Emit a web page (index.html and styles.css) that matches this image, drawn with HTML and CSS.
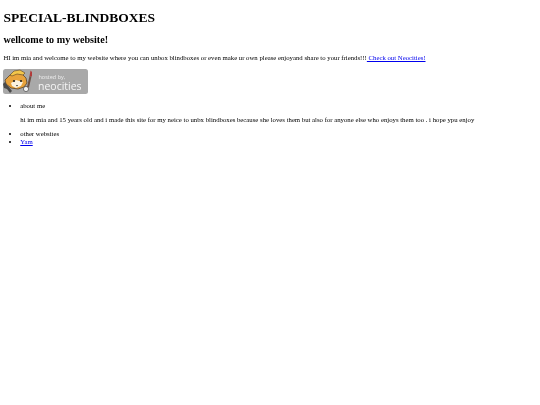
FILE: index.html
```html
<!DOCTYPE html>
<html lang="en">
<head>
<meta charset="utf-8">
<title>SPECIAL-BLINDBOXES</title>
<link rel="stylesheet" href="styles.css">
</head>
<body>
<h1>SPECIAL-BLINDBOXES</h1>
<h2>wellcome to my website!</h2>
<p class="intro">HI im mia and welcome to my website where you can unbox blindboxes or even make ur own please enjoyand share to your friends!!!<a href="#"> Check out Neocities!</a></p>
<a href="#"><svg class="badge" width="85" height="25" viewBox="0 0 85 25" role="img" aria-label="hosted by neocities">
<rect width="85" height="25" rx="2.5" fill="#a9a9a9"/>
<path d="M2 11l5-5 6-2 6 1 4 4 1 5-3 4-6 2-7-1-5-4z" fill="#e8a33c" stroke="#4a3520" stroke-width=".7"/>
<path d="M8 14l5-3 7 2-2 4-5 2-4-2z" fill="#fbf3e0"/>
<circle cx="11" cy="12" r="1.100" fill="#222"/>
<circle cx="18" cy="12" r="1.100" fill="#222"/>
<path d="M13 16l2 0-1 1.500z" fill="#222"/>
<path d="M7 6l4-4 6-1 5 3-2 2-6-1-5 2z" fill="#f3c64a" stroke="#5a4020" stroke-width=".6"/>
<path d="M2 13l2 3 2 2 3 4-2 2-3-4-3-1-1-4z" fill="#4a4a4a"/>
<circle cx="23" cy="20" r="2.600" fill="#f2f2f2" stroke="#444" stroke-width=".7"/>
<path d="M24 18l2.500-11 2 .5-2.500 11z" fill="#6b5348"/>
<path d="M26.500 7l1-5.500 1.500 1.500 0 4.500z" fill="#b23a3a"/>
<text x="35.500" y="10" class="badge-small">hosted by,</text>
<text x="35" y="20.500" class="badge-big">neocities</text>
</svg></a>
<ul>
<li>about me
<p>hi im mia and 15 years old and i made this site for my neice to unbx blindboxes because she loves them but also for anyone else who enjoys them too . i hope ypu enjoy</p>
</li>
<li>other websites</li>
<li><a href="#">Yam</a></li>
</ul>
</body>
</html>
```
FILE: styles.css
```css
html { background: #fff; }
body {
  margin: 3.375px;
  font-family: "Liberation Serif", "Times New Roman", serif;
  font-size: 6.75px;
  line-height: 7.6px;
  color: #000;
  filter: blur(0.3px);
}
h1 { font-size: 13.5px; line-height: 15.5px; margin: 7px 0 8px; }
h2 { font-size: 10.125px; line-height: 11.6px; margin: 8px 0 8.4px; }
p { margin: 6.75px 0; }
.intro { margin-bottom: 7.5px; }
a { color: #00e; }
.badge { vertical-align: baseline; }
.badge-small { font-family: "Open Sans", sans-serif; font-size: 5.500px; fill: #eee; }
.badge-big { font-family: "Open Sans", sans-serif; font-size: 10.500px; fill: #f5f5f5; }
ul { margin: 6px 0; padding-left: 16.875px; }
```
